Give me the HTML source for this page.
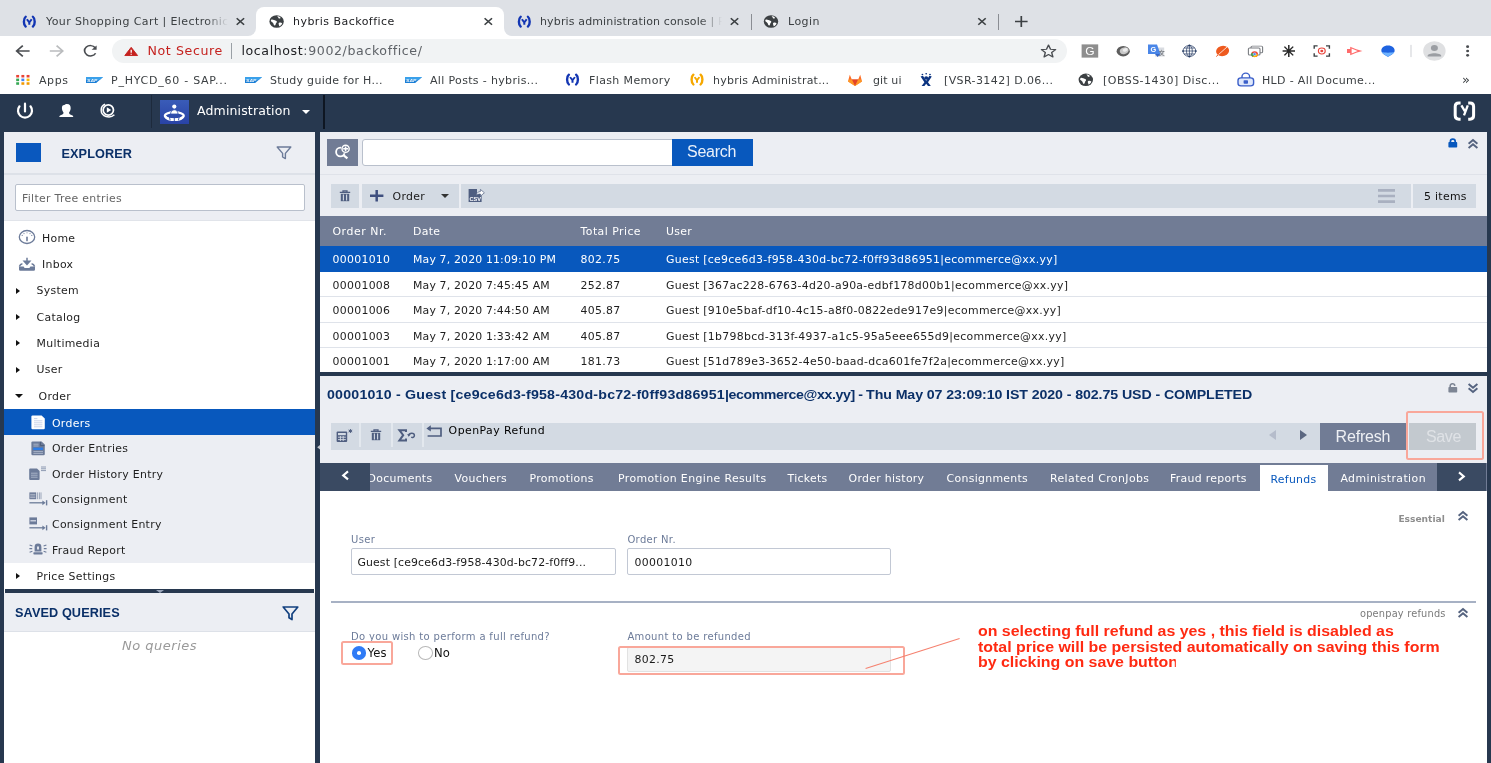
<!DOCTYPE html>
<html lang="en">
<head>
<meta charset="utf-8">
<title>hybris Backoffice</title>
<style>
*{box-sizing:border-box;margin:0;padding:0}
html,body{width:1491px;height:763px;overflow:hidden;background:#27384f}
body{position:relative;font-family:"Liberation Sans",sans-serif;font-size:13px;color:#262626}
.abs{position:absolute}
.t{position:absolute;white-space:nowrap;line-height:1}
svg{position:absolute;overflow:visible}
/* ---------- chrome ---------- */
#tabstrip{left:0;top:0;width:1491px;height:36px;background:#dee1e6}
#toolbar{left:0;top:36px;width:1491px;height:58px;background:#fff}
#activetab{left:256px;top:7px;width:248px;height:29px;background:#fff;border-radius:8px 8px 0 0}
.curveL,.curveR{position:absolute;bottom:0;width:8px;height:8px;background:#fff}
.curveL{left:-8px}.curveR{right:-8px}
.curveL:before,.curveR:before{content:"";position:absolute;left:0;top:0;width:8px;height:8px;background:#dee1e6}
.curveL:before{border-radius:0 0 8px 0}.curveR:before{border-radius:0 0 0 8px}
#pill{left:112px;top:39px;width:955px;height:24px;border-radius:12px;background:#f1f3f4}
.ct{font-family:"DejaVu Sans","Liberation Sans",sans-serif;font-size:11px;color:#3c4043;letter-spacing:.46px;margin-top:1.4px}
.bm{font-family:"DejaVu Sans","Liberation Sans",sans-serif;font-size:11px;color:#3c4043;letter-spacing:.36px;top:75px}
.tabsep{position:absolute;top:14px;width:1px;height:16px;background:#8a8d93}
/* ---------- app ---------- */
#apphead{left:0;top:94px;width:1491px;height:38px;background:#27384f}

/* ---------- left panel ---------- */
.a{font-family:"DejaVu Sans","Liberation Sans",sans-serif;font-size:10.9px;letter-spacing:.3px;color:#1e1e1e;margin-top:2.7px}
#lp{left:4px;top:132px;width:311px;height:631px;background:#fff}
#lph{left:4px;top:132px;width:311px;height:43px;background:#eceef3;border-bottom:2px solid #dde1e8}
#lpf{left:4px;top:175px;width:311px;height:46px;background:#eceef3;border-bottom:1px solid #e1e4ea}
#filter{left:15px;top:184px;width:290px;height:27px;background:#fff;border:1px solid #b9c0cc;border-radius:2px}
.hd{font-weight:bold;font-size:12.7px;color:#0b3068;letter-spacing:.1px}
.tri{position:absolute;width:0;height:0;border:3.3px solid transparent;border-left:4.8px solid #111;border-right:0;margin-top:.4px}
.trid{position:absolute;width:0;height:0;border:4px solid transparent;border-top:4.4px solid #111;border-bottom:0}

/* ---------- right top: search + list ---------- */
#rp1{left:320px;top:132px;width:1167px;height:240px;background:#eceef3}
.tb{background:#d3dae3}
#thead{left:320px;top:216px;width:1167px;height:30px;background:#717c95}
.th{color:#fff;top:224.4px}
.row{position:absolute;left:320px;width:1167px;height:25.5px;background:#fff;border-bottom:1px solid #dfe3ea}

/* ---------- right bottom: editor ---------- */
#rp2{left:320px;top:376.4px;width:1167px;height:87px;background:#eceef3}
#tabs{left:320px;top:463px;width:1167px;height:28.4px;background:#717c95}
#form{left:320px;top:491.4px;width:1167px;height:272px;background:#fff}
.tab{color:#fff;top:470.9px}
.lbl{font-family:"DejaVu Sans","Liberation Sans",sans-serif;font-size:10px;letter-spacing:.34px;color:#6c7b99;margin-top:1.2px}
.inp{position:absolute;background:#fff;border:1px solid #c2c8d4;border-radius:2px}
.sep{position:absolute;top:423px;width:2px;height:24px;background:#e3e8ee}
.red{position:absolute;border:2px solid #f9a79a;border-radius:2.5px}
.note{font-weight:bold;font-size:14px;color:#ff2a12;transform-origin:0 50%;transform:scaleX(1.137)}
</style>
</head>
<body>
<div id="root" style="position:absolute;left:0;top:0;width:1491px;height:763px;will-change:transform">
<!-- ================= CHROME ================= -->
<div id="tabstrip" class="abs"></div>
<div id="toolbar" class="abs"></div>
<div id="activetab" class="abs"><i class="curveL"></i><i class="curveR"></i></div>
<div id="pill" class="abs"></div>

<!-- tab 1 -->
<div class="t ct" style="left:46px;top:15px;width:184px;overflow:hidden;letter-spacing:.4px">Your Shopping Cart | Electronics Site</div>
<div class="abs" style="left:206px;top:10px;width:26px;height:22px;background:linear-gradient(90deg,rgba(222,225,230,0),#dee1e6 85%)"></div>
<!-- tab 2 -->
<div class="t ct" style="left:293px;top:15px;color:#202124">hybris Backoffice</div>
<!-- tab 3 -->
<div class="t ct" style="left:540px;top:15px;width:184px;overflow:hidden;letter-spacing:.14px">hybris administration console | Platform</div>
<div class="abs" style="left:700px;top:10px;width:26px;height:22px;background:linear-gradient(90deg,rgba(222,225,230,0),#dee1e6 85%)"></div>
<!-- tab 4 -->
<div class="t ct" style="left:788px;top:15px">Login</div>
<i class="tabsep" style="left:751px"></i><i class="tabsep" style="left:998px"></i>

<!-- address -->
<div class="t" style="left:147.4px;top:45px;font-family:'DejaVu Sans','Liberation Sans',sans-serif;font-size:12.6px;color:#c5221f;letter-spacing:.62px">Not Secure</div>
<div class="abs" style="left:231px;top:43px;width:1px;height:16px;background:#9aa0a6"></div>
<div class="t" style="left:241.4px;top:45px;font-family:'DejaVu Sans','Liberation Sans',sans-serif;font-size:12.6px;color:#202124;letter-spacing:.6px">localhost<span style="color:#5f6368">:9002/backoffice/</span></div>

<!-- bookmarks -->
<div class="t bm" style="left:39px;letter-spacing:0.59px">Apps</div>
<div class="t bm" style="left:111px;letter-spacing:0.75px">P_HYCD_60 - SAP...</div>
<div class="t bm" style="left:270px;letter-spacing:0.31px">Study guide for H...</div>
<div class="t bm" style="left:430px;letter-spacing:0.34px">All Posts - hybris...</div>
<div class="t bm" style="left:589px;letter-spacing:0.38px">Flash Memory</div>
<div class="t bm" style="left:713px;letter-spacing:0.23px">hybris Administrat...</div>
<div class="t bm" style="left:873px;letter-spacing:0.12px">git ui</div>
<div class="t bm" style="left:944px;letter-spacing:0.4px">[VSR-3142] D.06...</div>
<div class="t bm" style="left:1103px;letter-spacing:0.47px">[OBSS-1430] Disc...</div>
<div class="t bm" style="left:1262px;letter-spacing:0.34px">HLD - All Docume...</div>
<div class="t bm" style="left:1462px;font-size:13px;top:73px">»</div>


<!-- ================= CHROME ICONS ================= -->
<svg id="chromeicons" width="1491" height="94" viewBox="0 0 1491 94" style="left:0;top:0">
<defs>
 <g id="hy"><!-- hybris (Y) favicon, 14x12 box, origin top-left -->
  <path d="M3.4 0.3 C1 2.4 1 9.6 3.4 11.7 M10.6 0.3 C13 2.4 13 9.6 10.6 11.7" fill="none" stroke-width="2.4" stroke-linecap="round"/>
  <path d="M4.6 3.2 L7 6.8 L9.4 3.2 M7 6.6 L7 9.6" fill="none" stroke-width="2"/>
 </g>
 <g id="globe"><!-- centred at 0,0 r 7.2 -->
  <circle r="7.2" fill="#3c4043"/>
  <path d="M-5.2 -2.2 C-3.5 -2.6 -2.2 -1.2 -0.8 -1 C0.4 -0.8 0.6 0.6 -0.2 1.4 C-1 2.2 -0.6 3.6 -1.6 4.6 C-2.4 5.2 -3 3.6 -3.2 2.4 C-3.6 0.8 -5.6 0.6 -5.8 -0.8 Z M0.6 -5.8 C2 -5.2 1.4 -3.8 2.6 -3.4 C4 -3 4.2 -4.4 3.4 -5.2 C2.6 -5.9 1.4 -6.2 0.6 -5.8 Z M2.2 1.6 C3.4 0.8 5 1.2 5.6 2.2 C5 3.8 3.8 5 2.6 5.4 C2.8 4.2 1.4 2.6 2.2 1.6 Z" fill="#fff"/>
 </g>
 <g id="x"><path d="M-3.7 -3.7 L3.7 3.7 M3.7 -3.7 L-3.7 3.7" stroke="#3c4043" stroke-width="1.6" fill="none"/></g>
 <g id="sap"><!-- 17x7 -->
  <path d="M0 0 H17 L10.2 7 H0 Z" fill="#1b7fd6"/>
  <path d="M0 0 H17 L13.6 3.5 H0 Z" fill="#3aa0ea"/>
  <text x="1.1" y="5.7" font-family="Liberation Sans,sans-serif" font-size="5" font-weight="bold" font-style="italic" fill="#fff" opacity=".92">SAP</text>
 </g>
</defs>
<g transform="translate(0 21.5) scale(1 0.87) translate(0 -21.5)">
<!-- tab favicons / close buttons -->
<use href="#hy" x="22.3" y="15.7" stroke="#1336b3"/>
<use href="#x" x="240.4" y="21.5"/>
<use href="#globe" x="276.6" y="21.5"/>
<use href="#x" x="488.3" y="21.5"/>
<use href="#hy" x="517.3" y="15.7" stroke="#1336b3"/>
<use href="#x" x="734.5" y="21.5"/>
<use href="#globe" x="771" y="21.5"/>
<use href="#x" x="982" y="21.5"/>
<path d="M1015 21.5 H1027.6 M1021.3 15.2 V27.8" stroke="#3c4043" stroke-width="1.7" fill="none"/>
</g>
<g transform="translate(0 51) scale(1 0.87) translate(0 -51)">
<!-- nav -->
<path d="M29.6 51 H17 M22.8 44.8 L16.6 51 L22.8 57.2" stroke="#494c50" stroke-width="1.7" fill="none"/>
<path d="M49.8 51 H62.4 M56.6 44.8 L62.8 51 L56.6 57.2" stroke="#babcbe" stroke-width="1.7" fill="none"/>
<path d="M95.2 47.2 A5.9 5.9 0 1 0 95.6 53.6" stroke="#494c50" stroke-width="1.7" fill="none"/>
<path d="M96.6 44.6 V49.6 H91.6 Z" fill="#494c50"/>
<!-- warning -->
<path d="M131.2 46.8 L137.6 56.2 H124.8 Z" fill="#c5221f" stroke="#c5221f" stroke-width="1" stroke-linejoin="round"/>
<path d="M131.2 49.6 V53 M131.2 54.1 V55.3" stroke="#fff" stroke-width="1.3"/>
<!-- star -->
<path d="M1048.5 44.2 L1050.5 49 L1055.6 49.4 L1051.7 52.8 L1052.9 57.8 L1048.5 55.1 L1044.1 57.8 L1045.3 52.8 L1041.4 49.4 L1046.5 49 Z" fill="none" stroke="#494c50" stroke-width="1.4" stroke-linejoin="round"/>
</g>
<g transform="translate(0 80) scale(1 0.87) translate(0 -80)">
<!-- apps grid -->
<g>
 <rect x="16.2" y="74.2" width="2.9" height="2.9" fill="#ea4335"/><rect x="21.4" y="74.2" width="2.9" height="2.9" fill="#ea4335"/><rect x="26.6" y="74.2" width="2.9" height="2.9" fill="#ea4335"/>
 <rect x="16.2" y="78.4" width="2.9" height="2.9" fill="#34a853"/><rect x="21.4" y="78.4" width="2.9" height="2.9" fill="#4285f4"/><rect x="26.6" y="78.4" width="2.9" height="2.9" fill="#fbbc05"/>
 <rect x="16.2" y="82.6" width="2.9" height="2.9" fill="#34a853"/><rect x="21.4" y="82.6" width="2.9" height="2.9" fill="#f29900"/><rect x="26.6" y="82.6" width="2.9" height="2.9" fill="#f29900"/>
</g>
<use href="#sap" x="86" y="76.5"/>
<use href="#sap" x="245" y="76.5"/>
<use href="#sap" x="405" y="76.5"/>
<use href="#hy" x="565.5" y="73.5" stroke="#1336b3"/>
<use href="#hy" x="690" y="73.5" stroke="#f6a800"/>
<!-- gitlab -->
<path d="M855 87 L848 81.6 L849.8 74 L851.8 79.4 H858.2 L860.2 74 L862 81.6 Z" fill="#fc6d26"/>
<path d="M855 87 L851.8 79.4 H858.2 Z" fill="#e24329"/>
<path d="M848 81.6 L849 79.4 H851.8 L855 87 Z M862 81.6 L861 79.4 H858.2 L855 87 Z" fill="#fca326" opacity=".8"/>
<!-- jira -->
<g fill="#0b3380"><circle cx="926.2" cy="77.6" r="2"/><path d="M920.6 76 L923 75 L926.2 81 L929.4 75 L931.8 76 L928 82.6 L930.8 87 H928 L926.2 84.4 L924.4 87 H921.6 L924.4 82.6 Z"/><circle cx="922.4" cy="73.6" r=".9"/><circle cx="926.2" cy="72.8" r=".9"/><circle cx="930" cy="73.6" r=".9"/></g>
<use href="#globe" x="1085.8" y="79.8"/>
<!-- HLD lock -->
<g><rect x="1238" y="77.6" width="15.6" height="9.2" rx="3" fill="#dfe8fb" stroke="#3b5fc9" stroke-width="1.4"/><path d="M1242 77.6 V76 A3.8 3.8 0 0 1 1249.6 76 V77.6" fill="none" stroke="#3b5fc9" stroke-width="1.4"/><rect x="1243.6" y="80.2" width="4.4" height="4" rx=".8" fill="#3b5fc9"/></g>
</g>
<g transform="translate(0 51) scale(1 0.87) translate(0 -51)">
<!-- extensions -->
<rect x="1081.6" y="43.4" width="16.6" height="15.2" fill="#8e8e8e"/><text x="1085.2" y="55.4" font-family="Liberation Sans,sans-serif" font-size="12" fill="#fff">G</text>
<ellipse cx="1123.2" cy="51.2" rx="6.6" ry="6" fill="#5d5d5d"/><ellipse cx="1124.2" cy="50.6" rx="4.6" ry="3.7" fill="#c9c9c9" transform="rotate(-22 1124.2 50.6)"/><ellipse cx="1125.2" cy="49.8" rx="2.6" ry="1.9" fill="#ededed" transform="rotate(-22 1125.2 49.8)"/>
<path d="M1157 47 h7.2 v10.4 h-9.4 z" fill="#d9dce1"/><path d="M1148 43.6 h9 l3.4 10.8 h-12.4 z" fill="#4a86e8"/><path d="M1155 54.4 l2.6 3.6 l2.8 -3.6 z" fill="#3465c4"/><text x="1150.6" y="52" font-family="Liberation Sans,sans-serif" font-size="7.4" font-weight="bold" fill="#fff">G</text><text x="1158.6" y="56" font-family="Liberation Sans,Noto Sans CJK SC,sans-serif" font-size="6.4" fill="#5f6368">文</text>
<g fill="none" stroke="#243a63" stroke-width=".75"><circle cx="1189.4" cy="51" r="6.4"/><ellipse cx="1189.4" cy="51" rx="2.9" ry="6.4"/><path d="M1183 51 H1195.8 M1189.4 44.6 V57.4 M1184 47.6 H1194.8 M1184 54.4 H1194.8"/></g>
<g fill="#243a63"><circle cx="1189.4" cy="44.6" r="1"/><circle cx="1189.4" cy="57.4" r="1"/><circle cx="1183" cy="51" r="1"/><circle cx="1195.8" cy="51" r="1"/></g>
<ellipse cx="1222.6" cy="51" rx="6.6" ry="5.8" fill="#ee5a1f" transform="rotate(-20 1222.6 51)"/><path d="M1216.8 56.8 L1228 45.4" stroke="#fff" stroke-width="1" opacity=".85"/><path d="M1216.2 57.4 L1218.6 55" stroke="#ee5a1f" stroke-width="1"/>
<g><rect x="1251" y="45.4" width="11.6" height="7.6" rx="1.2" fill="#fff" stroke="#7a7d82" stroke-width="1.1"/><rect x="1248.4" y="47.6" width="11.6" height="8" rx="1.2" fill="#fff" stroke="#7a7d82" stroke-width="1.1"/><circle cx="1254.6" cy="54.6" r="3.4" fill="#ea4335"/><path d="M1254.6 54.6 L1258 54.6 A3.4 3.4 0 0 1 1252.8 57.5 Z" fill="#fbbc05"/><path d="M1254.6 54.6 L1252.8 57.5 A3.4 3.4 0 0 1 1251.7 52.9 Z" fill="#34a853"/><circle cx="1254.6" cy="54.6" r="1.5" fill="#4285f4" stroke="#fff" stroke-width=".5"/></g>
<path d="M1288.8 44 V58 M1282.6 51 H1295 M1284.4 46 L1293.2 56 M1293.2 46 L1284.4 56" stroke="#2a2a2a" stroke-width="1.5" fill="none"/>
<g fill="none" stroke="#3c4043" stroke-width="1.4"><path d="M1314.2 48.4 V45 H1317.6 M1326 45 H1329.4 V48.4 M1329.4 53.6 V57 H1326 M1317.6 57 H1314.2 V53.6"/></g><circle cx="1321.8" cy="51" r="3.4" fill="none" stroke="#e8453c" stroke-width="1.2"/><circle cx="1321.8" cy="51" r="1.5" fill="#e8453c"/>
<path d="M1347 48.6 h3.2 v-2.6 l6 3 l6.2 2 l-6.2 2 l-6 3 v-2.6 h-3.2 z" fill="#ff6b6b"/><path d="M1351.6 48.2 L1357.6 51 L1351.6 53.8 Z" fill="#fff"/>
<path d="M1388 44.8 C1392.4 44.8 1395 47.8 1394.6 51 C1394.2 54 1391 55.8 1388 57.6 C1385 55.8 1381.8 54 1381.4 51 C1381 47.8 1383.6 44.8 1388 44.8 Z" fill="#1f63e0"/><path d="M1381.6 52 C1384 53.4 1392 53.4 1394.4 52 C1393.4 54.6 1390.6 56 1388 57.6 C1385.4 56 1382.6 54.6 1381.6 52 Z" fill="#6fb4ff"/>
<path d="M1411 44 V58" stroke="#c9ccd1" stroke-width="1"/>
<circle cx="1434.4" cy="51" r="11.2" fill="#dfe0e2"/><circle cx="1434.4" cy="47.6" r="3.5" fill="#9b9ea3"/><path d="M1427.6 56.6 C1427.6 52.4 1441.2 52.4 1441.2 56.6 V57.4 H1427.6 Z" fill="#9b9ea3"/>
<circle cx="1467.6" cy="46" r="1.5" fill="#494c50"/><circle cx="1467.6" cy="51" r="1.5" fill="#494c50"/><circle cx="1467.6" cy="56" r="1.5" fill="#494c50"/>
</g>
</svg>

<!-- ================= APP HEADER ================= -->
<div id="apphead" class="abs"></div>
<div class="abs" style="left:151px;top:95px;width:1px;height:33px;background:#1d2a3c"></div>
<div class="abs" style="left:323px;top:95px;width:2px;height:34px;background:#0e1622"></div>
<div class="abs" style="left:160px;top:100px;width:29px;height:24px;background:linear-gradient(#3a5cb8,#2943a6)"></div>
<div class="t" style="left:197px;top:105.1px;font-family:'DejaVu Sans','Liberation Sans',sans-serif;font-size:12.5px;color:#fff;letter-spacing:.15px">Administration</div>
<div class="abs" style="left:301.8px;top:110px;border:4px solid transparent;border-top:4px solid #fff;border-bottom:0"></div>


<!-- app header icons -->
<svg width="330" height="38" viewBox="0 94 330 38" style="left:0;top:94px">
 <path d="M19.5 106.3 A7 7 0 1 0 30.5 106.3" fill="none" stroke="#fff" stroke-width="2.2" stroke-linecap="round"/>
 <path d="M25 103.7 V111.4" stroke="#fff" stroke-width="2.2" stroke-linecap="round"/>
 <g transform="translate(66.3 110.6) scale(.93) translate(-66.3 -110.6)"><path d="M67 103.6 C70 103.6 71.2 105.8 71 108.4 C70.8 110.6 69.8 112 69.2 112.8 C69.2 114.2 70.6 114.8 72.4 115.5 C73.4 115.9 73.8 116.5 73.8 117.4 H58.8 C58.8 116.5 59.2 115.9 60.2 115.5 C62 114.8 63.4 114.2 63.4 112.8 C62.8 112 61.8 110.6 61.6 108.4 C61.4 105.6 62.6 104.4 64.4 104.6 C65 103.8 66 103.6 67 103.6 Z" fill="#fff"/></g>
 <g transform="translate(107.3 110.3) scale(.92) translate(-107.3 -110.3)"><circle cx="108.4" cy="110" r="5.6" fill="none" stroke="#fff" stroke-width="1.9"/>
 <path d="M106.8 107 L111.6 110 L106.8 113 Z" fill="#fff"/>
 <path d="M105 103.8 C99.4 105.6 98.6 114.6 106 117 C109.6 118 113 117 115 115.2" fill="none" stroke="#fff" stroke-width="1.6"/></g>
 <!-- administration icon -->
 <ellipse cx="174.3" cy="115.8" rx="9.4" ry="3.6" fill="none" stroke="#fff" stroke-width="2.3"/>
 <path d="M165.6 116.6 C168 121 180.6 121 183 116.6" fill="none" stroke="#fff" stroke-width="2.2"/>
 <path d="M169.4 116.8 L170.2 120.4 M179.2 116.8 L178.4 120.4 M174.3 117.6 V121" stroke="#2d4aac" stroke-width=".9"/>
 <path d="M170.6 114 C170.6 108.4 178 108.4 178 114 Z" fill="#fff" stroke="#3452b0" stroke-width=".8"/>
 <circle cx="174.3" cy="106.6" r="2.1" fill="#fff"/>
 <!-- hybris logo right -->
</svg>
<svg width="30" height="24" viewBox="1450 99 30 24" style="left:1450px;top:99px">
 <path d="M1460.6 103 H1458.8 Q1455.2 103 1455.2 106.6 V115.6 Q1455.2 119.2 1458.8 119.2 H1460.6 M1468.2 103 H1470 Q1473.6 103 1473.6 106.6 V115.6 Q1473.6 119.2 1470 119.2 H1468.2" fill="none" stroke="#fff" stroke-width="3"/>
 <path d="M1461.4 105.4 L1464.8 111.2 M1467.8 105.4 L1464 115.4" fill="none" stroke="#fff" stroke-width="2.3"/>
</svg>

<!-- ================= LEFT PANEL ================= -->
<div id="lp" class="abs"></div>
<div id="lph" class="abs"></div>
<div id="lpf" class="abs"></div>
<div class="abs" style="left:16px;top:143px;width:25px;height:19px;background:#0a58be"></div>
<div class="t hd" style="left:61.5px;top:147.6px">EXPLORER</div>
<svg width="16" height="14" viewBox="0 0 16 14" style="left:276px;top:146px"><path d="M1.2 1 H14.8 L9.4 7.4 V12.6 L6.6 11 V7.4 Z" fill="none" stroke="#6c7b99" stroke-width="1.4" stroke-linejoin="round"/></svg>
<div id="filter" class="abs"></div>
<div class="t a" style="left:22px;top:191.4px;color:#666">Filter Tree entries</div>

<!-- tree -->
<svg width="18" height="16" viewBox="0 0 18 16" style="left:18px;top:229.4px"><ellipse cx="9" cy="8" rx="7.7" ry="6.5" fill="none" stroke="#6c7b99" stroke-width="1.3"/><path d="M9 8.4 V11.6" stroke="#6c7b99" stroke-width="1.6" stroke-linecap="round"/><path d="M4.2 6.4 h.01 M6 4.6 h.01 M9 3.8 h.01 M12 4.6 h.01 M13.8 6.4 h.01" stroke="#6c7b99" stroke-width="1.1" stroke-linecap="round"/></svg>
<div class="t a" style="left:42px;top:231.1px">Home</div>
<svg width="18" height="15" viewBox="0 0 18 15" style="left:18px;top:256.6px"><path d="M1.4 9.4 C2 7.6 3 7 4.4 6.8 M16.6 9.4 C16 7.6 15 7 13.6 6.8" fill="none" stroke="#6c7b99" stroke-width="1.5"/><path d="M1 9.6 H5.6 L6.6 11 H11.4 L12.4 9.6 H17 V12.6 Q17 13.8 15.8 13.8 H2.2 Q1 13.8 1 12.6 Z" fill="#6c7b99"/><path d="M9 .8 V5.4 M6.2 4.2 L9 7.4 L11.8 4.2 Z" stroke="#6c7b99" stroke-width="1.5" fill="#6c7b99"/></svg>
<div class="t a" style="left:42px;top:257.6px">Inbox</div>
<i class="tri" style="left:15.6px;top:287.4px"></i><div class="t a" style="left:36.6px;top:283.8px">System</div>
<i class="tri" style="left:15.6px;top:313.7px"></i><div class="t a" style="left:36.6px;top:310.1px">Catalog</div>
<i class="tri" style="left:15.6px;top:340px"></i><div class="t a" style="left:36.6px;top:336.4px">Multimedia</div>
<i class="tri" style="left:15.6px;top:366.3px"></i><div class="t a" style="left:36.6px;top:362.7px">User</div>
<i class="trid" style="left:15.2px;top:393.6px"></i><div class="t a" style="left:38.6px;top:389px">Order</div>

<div class="abs" style="left:4px;top:409.4px;width:311px;height:25.4px;background:#0858bd"></div>
<div class="abs" style="left:4px;top:434.8px;width:311px;height:127.8px;background:#eceef3"></div>
<!-- orders icon -->
<svg width="15" height="15" viewBox="0 0 15 15" style="left:31px;top:415px"><path d="M1.6 .4 H10.6 L13.8 3.4 V13 Q13.8 14.2 12.6 14.2 H1.6 Q.4 14.2 .4 13 V1.6 Q.4 .4 1.6 .4 Z" fill="#fff"/><path d="M3 3.6 H6.4 M3 5.8 H11.4 M3 7.8 H11.4 M3 9.8 H11.4 M3 11.8 H11.4" stroke="#c9d3ea" stroke-width="1"/></svg>
<div class="t a" style="left:52px;top:416.2px;color:#fff">Orders</div>
<!-- order entries icon -->
<svg width="15" height="15" viewBox="0 0 15 15" style="left:31px;top:440.6px"><path d="M1.6 .4 H10.6 L13.8 3.4 V13 Q13.8 14.2 12.6 14.2 H1.6 Q.4 14.2 .4 13 V1.6 Q.4 .4 1.6 .4 Z" fill="#6c7b99"/><path d="M9.4 .8 V4.6 H13.4" fill="none" stroke="#4f5d7a" stroke-width="1"/><path d="M2.4 3.2 H7.6 M2.4 5 H7.6" stroke="#aeb8cc" stroke-width=".9"/><rect x="2.2" y="6.6" width="9.8" height="2.4" fill="#2e7de6"/><path d="M2.4 10.6 H12 M2.4 12.4 H12" stroke="#aeb8cc" stroke-width=".9"/></svg>
<div class="t a" style="left:52px;top:441.6px">Order Entries</div>
<!-- order history icon -->
<svg width="18" height="15" viewBox="0 0 18 15" style="left:29px;top:465.6px"><path d="M1.2 2.6 H8 L10.6 5 V13 Q10.6 14 9.6 14 H1.2 Q.2 14 .2 13 V3.6 Q.2 2.6 1.2 2.6 Z" fill="#6c7b99"/><path d="M2 7.2 H8.6 M2 9.2 H8.6 M2 11.2 H8.6" stroke="#aeb8cc" stroke-width=".9"/><path d="M12 1 H17 M12 2.8 H17 M12 4.6 H17" stroke="#8e9ab2" stroke-width="1"/></svg>
<div class="t a" style="left:52px;top:467px">Order History Entry</div>
<!-- consignment icon -->
<svg width="19" height="14" viewBox="0 0 19 14" style="left:28.6px;top:491.6px"><rect x=".4" y=".4" width="6.8" height="6.8" fill="#6c7b99"/><path d="M1.2 2.4 H6.4 M1.2 4 H6.4 M1.2 5.6 H6.4" stroke="#c5ccda" stroke-width=".7"/><path d="M8.6 .4 V7.2 M10.4 .4 V7.2 M12 .4 V7.2" stroke="#9aa5ba" stroke-width="1"/><path d="M.4 10.8 H14.6" stroke="#6c7b99" stroke-width="1.3"/><path d="M13.4 8.4 L16.6 10.8 L13.4 13.2 Z" fill="#6c7b99"/><path d="M17.6 8.2 V13.4" stroke="#6c7b99" stroke-width="1.4"/></svg>
<div class="t a" style="left:52px;top:492.4px">Consignment</div>
<!-- consignment entry icon -->
<svg width="19" height="14" viewBox="0 0 19 14" style="left:28.6px;top:517px"><rect x=".4" y=".4" width="7.6" height="7" fill="#6c7b99"/><path d="M1.4 3.8 H7" stroke="#dfe3ec" stroke-width="1.2"/><path d="M.4 10.8 H14.6" stroke="#6c7b99" stroke-width="1.3"/><path d="M13.4 8.4 L16.6 10.8 L13.4 13.2 Z" fill="#6c7b99"/><path d="M17.6 8.2 V13.4" stroke="#6c7b99" stroke-width="1.4"/></svg>
<div class="t a" style="left:52px;top:517.8px">Consignment Entry</div>
<!-- fraud icon -->
<svg width="18" height="14" viewBox="0 0 18 14" style="left:29px;top:542.4px"><path d="M5.6 9.6 V5 Q5.6 1.6 9 1.6 Q12.4 1.6 12.4 5 V9.6 Z" fill="#6c7b99"/><rect x="4.4" y="10.2" width="9.2" height="2.2" rx=".6" fill="#6c7b99"/><path d="M8 4.4 H10 V7.6 H8 Z" fill="#dfe3ec"/><path d="M.6 3 L3.4 4 M.4 6.6 H3.2 M.6 10.2 L3.4 9.2 M17.4 3 L14.6 4 M17.6 6.6 H14.8 M17.4 10.2 L14.6 9.2" stroke="#6c7b99" stroke-width="1.1"/></svg>
<div class="t a" style="left:52px;top:543.2px">Fraud Report</div>
<i class="tri" style="left:15.6px;top:573px"></i><div class="t a" style="left:36.6px;top:569.6px">Price Settings</div>

<!-- splitter + saved queries -->
<div class="abs" style="left:5px;top:589px;width:309px;height:4.4px;background:#27384f"></div>
<div class="abs" style="left:156px;top:590.4px;border:4px solid transparent;border-top:3px solid #9aa5ba;border-bottom:0"></div>
<div class="abs" style="left:4px;top:593.4px;width:311px;height:38.6px;background:#eceef3;border-bottom:1px solid #dde1e8"></div>
<div class="t hd" style="left:15px;top:606.8px">SAVED QUERIES</div>
<svg width="17" height="15" viewBox="0 0 17 15" style="left:282px;top:605.6px"><path d="M1.2 1 H15.8 L10 8 V13.6 L7 11.8 V8 Z" fill="none" stroke="#12407f" stroke-width="1.7" stroke-linejoin="round"/></svg>
<div class="t" style="left:4px;width:311px;text-align:center;top:638.6px;font-family:'DejaVu Sans','Liberation Sans',sans-serif;font-size:13px;font-style:italic;color:#9a9a9a;letter-spacing:.5px;margin-top:.4px">No queries</div>

<!--LEFT-->

<!-- ================= RIGHT TOP: SEARCH + LIST ================= -->
<div id="rp1" class="abs"></div>
<div class="abs" style="left:327.4px;top:138.5px;width:30.8px;height:27px;background:#717c95"></div>
<svg width="18" height="16" viewBox="0 0 18 16" style="left:334px;top:143.6px"><circle cx="6.4" cy="8" r="4.3" fill="none" stroke="#fff" stroke-width="1.8"/><path d="M9.4 11.2 L13.4 14.4" stroke="#fff" stroke-width="2.2"/><circle cx="11.6" cy="4.8" r="4.6" fill="#717c95"/><circle cx="11.6" cy="4.8" r="3.6" fill="none" stroke="#fff" stroke-width="1.4"/><path d="M9.2 4.8 H14 M11.6 2.4 V7.2" stroke="#fff" stroke-width="1.5"/></svg>
<div class="abs" style="left:361.6px;top:138.5px;width:312px;height:27px;background:#fff;border:1px solid #b9c0cc;border-radius:3px 0 0 3px"></div>
<div class="abs" style="left:672px;top:138.5px;width:81px;height:27px;background:#0858bd"></div>
<div class="t" style="left:687px;top:144px;font-size:16px;color:#e9f0fa;letter-spacing:-.25px">Search</div>
<svg width="12" height="12" viewBox="0 0 12 12" style="left:1446.6px;top:137.4px"><path d="M3.4 5.4 V4.4 A2.4 2.2 0 0 1 8.2 4.4 V5.4" fill="none" stroke="#0858bd" stroke-width="1.7"/><rect x="1.4" y="5" width="8.8" height="5.6" rx=".8" fill="#0858bd"/></svg>
<svg width="12" height="12" viewBox="0 0 12 12" style="left:1467.4px;top:137.6px"><path d="M1.6 5.8 L6 2 L10.4 5.8 M1.6 10 L6 6.2 L10.4 10" fill="none" stroke="#55637f" stroke-width="1.9"/></svg>
<div class="abs" style="left:320px;top:174px;width:1167px;height:1.4px;background:#dfe2e9"></div>
<!-- list toolbar -->
<div class="abs tb" style="left:330.5px;top:184.4px;width:28.8px;height:23.7px"></div>
<div class="abs tb" style="left:361.5px;top:184.4px;width:97.8px;height:23.7px"></div>
<div class="abs tb" style="left:461.4px;top:184.4px;width:949.4px;height:23.7px"></div>
<div class="abs tb" style="left:1413.2px;top:184.4px;width:62.8px;height:23.7px"></div>
<svg width="12" height="12" viewBox="0 0 12 12" style="left:339.4px;top:190.4px"><path d="M.8 2.4 H11.2 M4 2 V.8 H8 V2" fill="none" stroke="#4f5e80" stroke-width="1.3"/><path d="M1.8 3.8 H10.2 V11.2 H1.8 Z" fill="#4f5e80"/><path d="M4.4 4.6 V10.4 M7.6 4.6 V10.4" stroke="#d3dae3" stroke-width="1.1"/></svg>
<svg width="14" height="12" viewBox="0 0 14 12" style="left:369.8px;top:190px"><path d="M0 5.8 H13.4 M6.7 0 V11.4" stroke="#3f4f7f" stroke-width="2.5" fill="none"/></svg>
<div class="t a" style="left:392.6px;top:189.2px;color:#1a1a1a">Order</div>
<div class="abs" style="left:441px;top:194px;border:4.6px solid transparent;border-top:4.6px solid #333;border-bottom:0"></div>
<svg width="17" height="15" viewBox="0 0 17 15" style="left:467.6px;top:188.4px"><path d="M.6 1 H9 V6 H13.6 V14 H.6 Z" fill="#4f5e80"/><path d="M8.4 7.4 C8.6 4.6 10.4 3.6 12.4 3.6 V1.4 L16.4 4.8 L12.4 8.2 V6 C10.6 6 9.4 6.4 8.4 7.4 Z" fill="#fff" stroke="#4f5e80" stroke-width=".7"/><text x="1.4" y="12.8" font-family="Liberation Sans,sans-serif" font-size="5.6" font-weight="bold" fill="#fff">CSV</text></svg>
<svg width="18" height="14" viewBox="0 0 18 14" style="left:1378px;top:189.4px"><path d="M0 1.4 H17 M0 7 H17 M0 12.6 H17" stroke="#a9b0c0" stroke-width="2.7"/></svg>
<div class="t a" style="left:1424px;top:189.2px;color:#111">5 items</div>
<!-- table -->
<div id="thead" class="abs"></div>
<div class="t a th" style="left:332.5px;letter-spacing:.55px">Order Nr.</div><div class="t a th" style="left:413px">Date</div><div class="t a th" style="left:580.5px;letter-spacing:.46px">Total Price</div><div class="t a th" style="left:666px">User</div>
<div class="row" style="top:246.0px;background:#0858bd;border-bottom-color:#0858bd;"></div>
<div class="t a" style="left:332.5px;top:252.5px;color:#fff;">00001010</div><div class="t a" style="left:413px;top:252.5px;color:#fff;letter-spacing:.16px">May 7, 2020 11:09:10 PM</div><div class="t a" style="left:580.5px;top:252.5px;color:#fff;">802.75</div><div class="t a" style="left:666px;top:252.5px;color:#fff;">Guest [ce9ce6d3-f958-430d-bc72-f0ff93d86951|ecommerce@xx.yy]</div>
<div class="row" style="top:271.5px;"></div>
<div class="t a" style="left:332.5px;top:278.0px;">00001008</div><div class="t a" style="left:413px;top:278.0px;letter-spacing:.16px">May 7, 2020 7:45:45 AM</div><div class="t a" style="left:580.5px;top:278.0px;">252.87</div><div class="t a" style="left:666px;top:278.0px;">Guest [367ac228-6763-4d20-a90a-edbf178d00b1|ecommerce@xx.yy]</div>
<div class="row" style="top:297.0px;"></div>
<div class="t a" style="left:332.5px;top:303.5px;">00001006</div><div class="t a" style="left:413px;top:303.5px;letter-spacing:.16px">May 7, 2020 7:44:50 AM</div><div class="t a" style="left:580.5px;top:303.5px;">405.87</div><div class="t a" style="left:666px;top:303.5px;">Guest [910e5baf-df10-4c15-a8f0-0822ede917e9|ecommerce@xx.yy]</div>
<div class="row" style="top:322.5px;"></div>
<div class="t a" style="left:332.5px;top:329.0px;">00001003</div><div class="t a" style="left:413px;top:329.0px;letter-spacing:.16px">May 7, 2020 1:33:42 AM</div><div class="t a" style="left:580.5px;top:329.0px;">405.87</div><div class="t a" style="left:666px;top:329.0px;">Guest [1b798bcd-313f-4937-a1c5-95a5eee655d9|ecommerce@xx.yy]</div>
<div class="row" style="top:348.0px;"></div>
<div class="t a" style="left:332.5px;top:354.5px;">00001001</div><div class="t a" style="left:413px;top:354.5px;letter-spacing:.16px">May 7, 2020 1:17:00 AM</div><div class="t a" style="left:580.5px;top:354.5px;">181.73</div><div class="t a" style="left:666px;top:354.5px;">Guest [51d789e3-3652-4e50-baad-dca601fe7f2a|ecommerce@xx.yy]</div>

<div class="abs" style="left:320px;top:372px;width:1167px;height:4.4px;background:#27384f"></div>


<!-- ================= RIGHT BOTTOM: EDITOR ================= -->
<div id="rp2" class="abs"></div>
<div class="t" style="left:327.4px;top:388.8px;font-weight:bold;font-size:12.2px;color:#0b3068;transform-origin:0 50%;transform:scaleX(1.1645)"><span style="letter-spacing:.18px">00001010 - Guest [ce9ce6d3-f958-430d-bc72-f0ff93d86951</span><span style="letter-spacing:-.36px">|ecommerce@xx.yy] - </span><span style="letter-spacing:-.084px">Thu May 07 23:09:10 IST 2020 - 802.75 USD - COMPLETED</span></div>
<svg width="12" height="12" viewBox="0 0 12 12" style="left:1446.6px;top:381.8px"><path d="M3.2 5.2 V4.2 A2.3 2.2 0 0 1 7.8 3.8" fill="none" stroke="#7d8594" stroke-width="1.6"/><rect x="1.4" y="5" width="8.8" height="5.6" rx=".8" fill="#7d8594"/></svg>
<svg width="12" height="12" viewBox="0 0 12 12" style="left:1467.4px;top:381.6px"><path d="M1.6 2 L6 5.8 L10.4 2 M1.6 6.2 L6 10 L10.4 6.2" fill="none" stroke="#55637f" stroke-width="1.9"/></svg>
<!-- editor toolbar -->
<div class="abs tb" style="left:330.5px;top:423px;width:989.5px;height:27px"></div>
<i class="sep" style="left:359.4px"></i><i class="sep" style="left:390.8px"></i><i class="sep" style="left:421.6px"></i>
<svg width="18" height="14" viewBox="0 0 18 14" style="left:336px;top:429px"><rect x=".6" y="2.6" width="10.6" height="10.4" rx="1" fill="#4f5e80"/><rect x="2" y="4" width="7.8" height="2.2" fill="#d3dae3"/><path d="M2 8.2 H9.8 M2 10.6 H9.8 M4.4 7 V12 M7.2 7 V12" stroke="#d3dae3" stroke-width=".9"/><path d="M14.4 0 V4 M12.6 1 L16.2 3 M16.2 1 L12.6 3" stroke="#4f5e80" stroke-width="1"/></svg>
<svg width="12" height="12" viewBox="0 0 12 12" style="left:370.4px;top:429.4px"><path d="M.8 2.4 H11.2 M4 2 V.8 H8 V2" fill="none" stroke="#4f5e80" stroke-width="1.3"/><path d="M1.8 3.8 H10.2 V11.2 H1.8 Z" fill="#4f5e80"/><path d="M4.4 4.6 V10.4 M7.6 4.6 V10.4" stroke="#d3dae3" stroke-width="1.1"/></svg>
<svg width="18" height="13" viewBox="0 0 18 13" style="left:398.4px;top:428.6px"><path d="M8 3 V1.2 H1.4 L5.2 6.2 L1.4 11.4 H8 V9.6" fill="none" stroke="#4f5e80" stroke-width="2"/><path d="M10.8 6.4 C11.2 3.4 16.4 3.6 16.4 6.4 C16.4 8.2 14.4 8.8 13.2 8.2" fill="none" stroke="#4f5e80" stroke-width="1.5"/><path d="M9.2 5 L10.6 7.8 L12.6 5.6 Z" fill="#4f5e80"/></svg>
<svg width="17" height="13" viewBox="0 0 17 13" style="left:425.6px;top:425px"><path d="M2.6 3.4 H15 V11 H1.6" fill="none" stroke="#4f5e80" stroke-width="1.7"/><path d="M4.8 .2 L.4 3.4 L4.8 6.6 Z" fill="#4f5e80"/></svg>
<div class="t a" style="left:448.6px;top:423.4px;color:#000;letter-spacing:.46px">OpenPay Refund</div>
<div class="abs" style="left:1269px;top:430.4px;border:5.4px solid transparent;border-right:7px solid #b5bccb;border-left:0"></div>
<div class="abs" style="left:1300px;top:430.4px;border:5.4px solid transparent;border-left:7px solid #5b6781;border-right:0"></div>
<div class="abs" style="left:1320px;top:423px;width:88px;height:27px;background:#717c95"></div>
<div class="t" style="left:1335.6px;top:429.2px;font-size:16px;color:#eef0f4;letter-spacing:-.2px">Refresh</div>
<div class="abs" style="left:1409.4px;top:423px;width:66.4px;height:27px;background:#c3c9cf"></div>
<div class="t" style="left:1426px;top:429.2px;font-size:16px;color:#dfe2e6;letter-spacing:-.35px">Save</div>
<div class="red" style="left:1406px;top:411px;width:78px;height:48.6px"></div>
<svg width="4" height="6" viewBox="316 444 4 6" style="left:316px;top:444px"><path d="M320 445 L317.2 447.3 L320 449.6 Z" fill="#c4c8cf"/></svg>
<!-- tabs -->
<div id="tabs" class="abs"></div>
<div class="abs" style="left:1260px;top:464.6px;width:68px;height:27px;background:#fff"></div>
<div class="t a tab" style="left:367.6px">Documents</div>
<div class="t a tab" style="left:454.6px">Vouchers</div>
<div class="t a tab" style="left:529.6px">Promotions</div>
<div class="t a tab" style="left:618px;letter-spacing:.4px">Promotion Engine Results</div>
<div class="t a tab" style="left:787.6px">Tickets</div>
<div class="t a tab" style="left:848.6px">Order history</div>
<div class="t a tab" style="left:946.6px">Consignments</div>
<div class="t a tab" style="left:1050px;letter-spacing:.42px">Related CronJobs</div>
<div class="t a tab" style="left:1170px">Fraud reports</div>
<div class="t a tab" style="left:1270.4px;top:472.5px;color:#0858bd">Refunds</div>
<div class="t a tab" style="left:1340.4px;letter-spacing:.42px">Administration</div>
<div class="abs" style="left:320px;top:463px;width:49.8px;height:28.4px;background:#3a4a62"></div>
<div class="abs" style="left:1437px;top:463px;width:49px;height:28.4px;background:#3a4a62"></div>
<svg width="9" height="11" viewBox="0 0 9 11" style="left:341px;top:470px"><path d="M7 1.4 L2.2 5.4 L7 9.4" fill="none" stroke="#fff" stroke-width="2.1"/></svg>
<svg width="9" height="11" viewBox="0 0 9 11" style="left:1456.6px;top:471px"><path d="M2 1.4 L6.8 5.4 L2 9.4" fill="none" stroke="#fff" stroke-width="2.1"/></svg>
<!-- form -->
<div id="form" class="abs"></div>
<div class="t" style="left:1398.4px;top:513.8px;font-family:'DejaVu Sans','Liberation Sans',sans-serif;font-size:9.1px;font-weight:bold;color:#8e8e8e;letter-spacing:0;margin-top:.8px">Essential</div>
<svg width="12" height="12" viewBox="0 0 12 12" style="left:1457px;top:510px"><path d="M1.6 5.8 L6 2 L10.4 5.8 M1.6 10 L6 6.2 L10.4 10" fill="none" stroke="#55637f" stroke-width="1.9"/></svg>
<div class="t lbl" style="left:351px;top:533.4px">User</div>
<div class="t lbl" style="left:627.4px;top:533.4px">Order Nr.</div>
<div class="inp" style="left:351px;top:548px;width:265px;height:27.4px"></div>
<div class="inp" style="left:627.4px;top:548px;width:264px;height:27.4px"></div>
<div class="t a" style="left:357.4px;top:554.9px;color:#1a1a1a;letter-spacing:.14px">Guest [ce9ce6d3-f958-430d-bc72-f0ff9...</div>
<div class="t a" style="left:634.6px;top:554.9px;color:#1a1a1a">00001010</div>
<div class="abs" style="left:330.6px;top:601px;width:1145.4px;height:1.6px;background:#a7b1c4"></div>
<div class="t" style="left:1360px;top:608.4px;font-family:'DejaVu Sans','Liberation Sans',sans-serif;font-size:9.8px;color:#7a7a7a;letter-spacing:.2px;margin-top:.8px">openpay refunds</div>
<svg width="12" height="12" viewBox="0 0 12 12" style="left:1457px;top:607.4px"><path d="M1.6 5.8 L6 2 L10.4 5.8 M1.6 10 L6 6.2 L10.4 10" fill="none" stroke="#55637f" stroke-width="1.9"/></svg>
<div class="t lbl" style="left:351px;top:630.4px">Do you wish to perform a full refund?</div>
<div class="t lbl" style="left:627.4px;top:630.4px">Amount to be refunded</div>
<!-- radios -->
<div class="abs" style="left:351.6px;top:646.4px;width:14.6px;height:13.4px;border-radius:50%;background:#2f7bf6"></div>
<div class="abs" style="left:356.5px;top:650.9px;width:4.8px;height:4.4px;border-radius:50%;background:#fff"></div>
<div class="t a" style="left:367.6px;top:646.8px;color:#111;font-size:11.6px;letter-spacing:.1px;margin-top:1px">Yes</div>
<div class="abs" style="left:418px;top:646.4px;width:14.6px;height:13.4px;border-radius:50%;background:#fff;border:1px solid #b9b9b9"></div>
<div class="t a" style="left:434px;top:646.8px;color:#111;font-size:11.6px;letter-spacing:.1px;margin-top:1px">No</div>
<div class="red" style="left:341px;top:641px;width:52.4px;height:24.4px"></div>
<!-- amount -->
<div class="inp" style="left:627.4px;top:647.4px;width:264px;height:25px;background:#f4f4f4;border-color:#e2e2e2"></div>
<div class="t a" style="left:634.6px;top:652.6px;color:#1a1a1a">802.75</div>
<div class="red" style="left:617.8px;top:645.6px;width:287px;height:29.4px"></div>
<svg width="100" height="34" viewBox="0 0 100 34" style="left:863px;top:636px"><path d="M2.6 32.4 L96.6 2.4" stroke="#f5816f" stroke-width="1.1" fill="none"/></svg>
<div class="t note" style="left:978px;top:623.6px">on selecting full refund as yes , this field is disabled as</div>
<div class="t note" style="left:978px;top:639.6px">total price will be persisted automatically on saving this form</div>
<div class="t note" style="left:978px;top:655.2px;width:173.8px;overflow:hidden;padding-bottom:5px">by clicking on save button</div>

<!--RIGHT-->
</div>
</body>
</html>
